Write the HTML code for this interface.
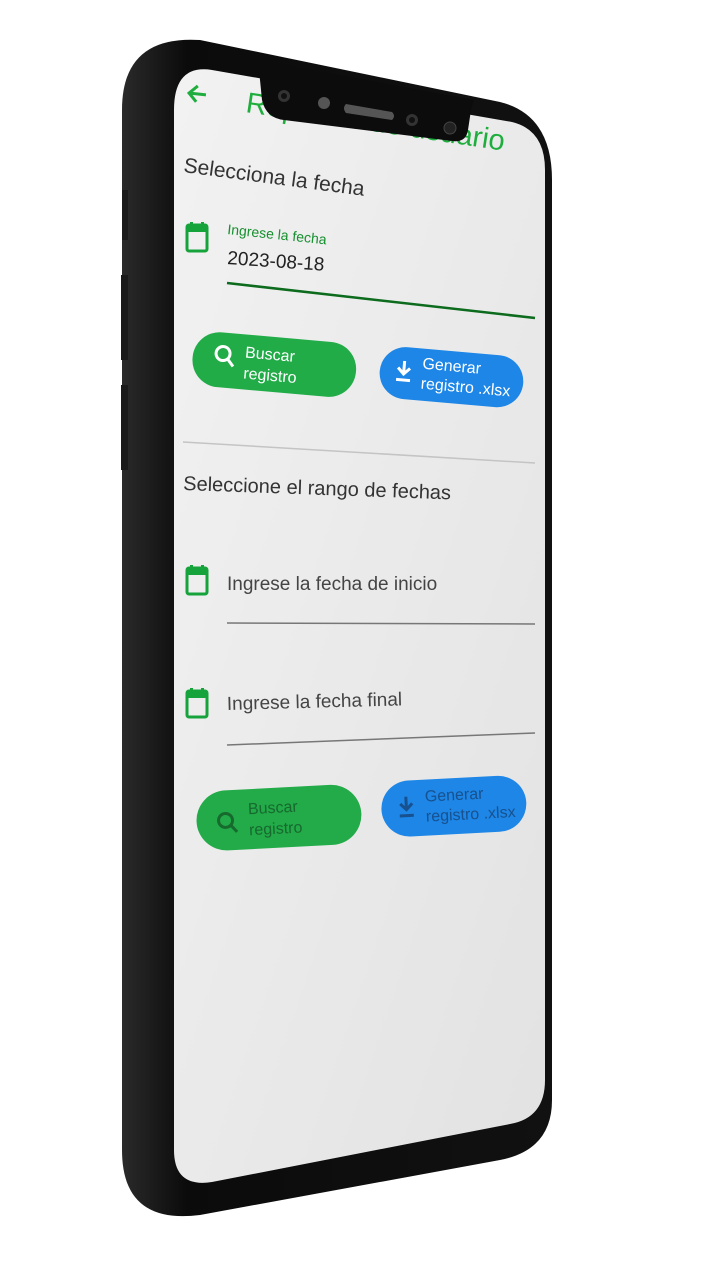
<!DOCTYPE html>
<html><head><meta charset="utf-8"><style>
html,body{margin:0;padding:0;background:#fff;width:720px;height:1280px;overflow:hidden}
svg{display:block}
text{font-family:"Liberation Sans",sans-serif}
</style></head><body>
<svg width="720" height="1280" viewBox="0 0 720 1280" xmlns="http://www.w3.org/2000/svg">
<defs>
<linearGradient id="scr" x1="0" y1="0" x2="1" y2="1">
<stop offset="0" stop-color="#f2f2f2"/><stop offset="1" stop-color="#e2e2e2"/></linearGradient>
<linearGradient id="body" x1="0" y1="0" x2="1" y2="0">
<stop offset="0" stop-color="#2a2a2a"/><stop offset="0.15" stop-color="#0b0b0b"/><stop offset="1" stop-color="#111"/></linearGradient>
</defs>
<!-- phone body -->
<path d="M200 40 L500 102 Q552 115 552 180 L552 1100 Q552 1150 500 1160 L200 1215 Q122 1225 122 1150 L122 110 Q122 35 200 40 Z" fill="url(#body)"/>
<path d="M128 190 L122 190 L122 240 L128 240 Z M128 275 L121 275 L121 360 L128 360Z M128 385 L121 385 L121 470 L128 470Z" fill="#1a1a1a"/>
<!-- screen -->
<path d="M212 70 L512 122 Q545 130 545 170 L545 1080 Q545 1118 510 1124 L212 1182 Q174 1188 174 1150 L174 110 Q174 64 212 70 Z" fill="url(#scr)"/>
<!-- title -->
<text x="0" y="0" transform="translate(245,112) rotate(8.5)" font-size="29" fill="#1fae3e">Reportes de usuario</text>
<!-- notch -->
<path d="M258 60 L262 100 Q266 118 284 120 L452 141 Q466 143 468 130 L471 110 L474 100 Z" fill="#0c0c0c"/>
<circle cx="284" cy="96" r="6" fill="#333"/><circle cx="284" cy="96" r="3" fill="#111"/>
<circle cx="324" cy="103" r="6" fill="#555"/>
<path d="M346 104 L392 112 Q396 116 392 120 L346 113 Q342 108 346 104Z" fill="#555"/>
<circle cx="412" cy="120" r="6" fill="#333"/><circle cx="412" cy="120" r="3" fill="#111"/>
<circle cx="450" cy="128" r="6" fill="#222" stroke="#444"/>
<!-- back arrow -->
<path d="M206 94 L190 94 M197 86 L189 94 L197 102" stroke="#1fae3e" stroke-width="3" fill="none" transform="rotate(6 198 94)"/>
<text transform="translate(183,172) rotate(7.5)" font-size="21" fill="#333">Selecciona la fecha</text>
<!-- calendar icon template -->
<g id="cal" transform="translate(186,222)">
<rect x="1" y="3" width="20" height="26" rx="2" fill="none" stroke="#17a33b" stroke-width="3"/>
<rect x="1" y="3" width="20" height="7" fill="#17a33b"/>
<rect x="4" y="0" width="3" height="5" fill="#17a33b"/><rect x="15" y="0" width="3" height="5" fill="#17a33b"/>
</g>
<text transform="translate(227,234) rotate(6)" font-size="14" fill="#17902f">Ingrese la fecha</text>
<text transform="translate(227,264) rotate(4)" font-size="19" fill="#222">2023-08-18</text>
<line x1="227" y1="283" x2="535" y2="318" stroke="#0c6b1d" stroke-width="2.5"/>
<!-- buttons 1 -->
<g transform="translate(195,330) rotate(5)">
<rect width="164" height="55" rx="27" fill="#21ac47"/>
<circle cx="30" cy="21" r="7" fill="none" stroke="#fff" stroke-width="3"/>
<line x1="35" y1="26" x2="41" y2="33" stroke="#fff" stroke-width="3"/>
<text x="52" y="23" font-size="16" fill="#fff">Buscar</text>
<text x="52" y="44" font-size="16" fill="#fff">registro</text>
</g>
<g transform="translate(382,345) rotate(5)">
<rect width="144" height="52" rx="26" fill="#1d86e6"/>
<path d="M24 14 L24 26 M18 21 L24 27 L30 21 M17 33 L31 33" stroke="#fff" stroke-width="3" fill="none"/>
<text x="42" y="20" font-size="16" fill="#fff">Generar</text>
<text x="42" y="40" font-size="16" fill="#fff">registro .xlsx</text>
</g>
<line x1="183" y1="442" x2="535" y2="463" stroke="#c4c4c4" stroke-width="1.5"/>
<text transform="translate(183,490) rotate(2)" font-size="20" fill="#333">Seleccione el rango de fechas</text>
<use href="#cal" transform="translate(0,343)"/>
<text transform="translate(227,590) rotate(0)" font-size="19" fill="#444">Ingrese la fecha de inicio</text>
<line x1="227" y1="623" x2="535" y2="624" stroke="#777" stroke-width="1.5"/>
<use href="#cal" transform="translate(0,466)"/>
<text transform="translate(227,710) rotate(-1.5)" font-size="19" fill="#444">Ingrese la fecha final</text>
<line x1="227" y1="745" x2="535" y2="733" stroke="#777" stroke-width="1.5"/>
<!-- buttons 2 -->
<g transform="translate(195,792) rotate(-3)">
<rect width="165" height="60" rx="30" fill="#22ab48"/>
<circle cx="29" cy="30" r="7" fill="none" stroke="#176a2e" stroke-width="3"/>
<line x1="34" y1="35" x2="40" y2="42" stroke="#176a2e" stroke-width="3"/>
<text x="52" y="25" font-size="16" fill="#17692e">Buscar</text>
<text x="52" y="46" font-size="16" fill="#17692e">registro</text>
</g>
<g transform="translate(380,782) rotate(-3)">
<rect width="145" height="56" rx="28" fill="#1d86e6"/>
<path d="M25 16 L25 28 M19 23 L25 29 L31 23 M18 35 L32 35" stroke="#17518f" stroke-width="3" fill="none"/>
<text x="44" y="22" font-size="16" fill="#17518f">Generar</text>
<text x="44" y="42" font-size="16" fill="#17518f">registro .xlsx</text>
</g>
</svg>
</body></html>
